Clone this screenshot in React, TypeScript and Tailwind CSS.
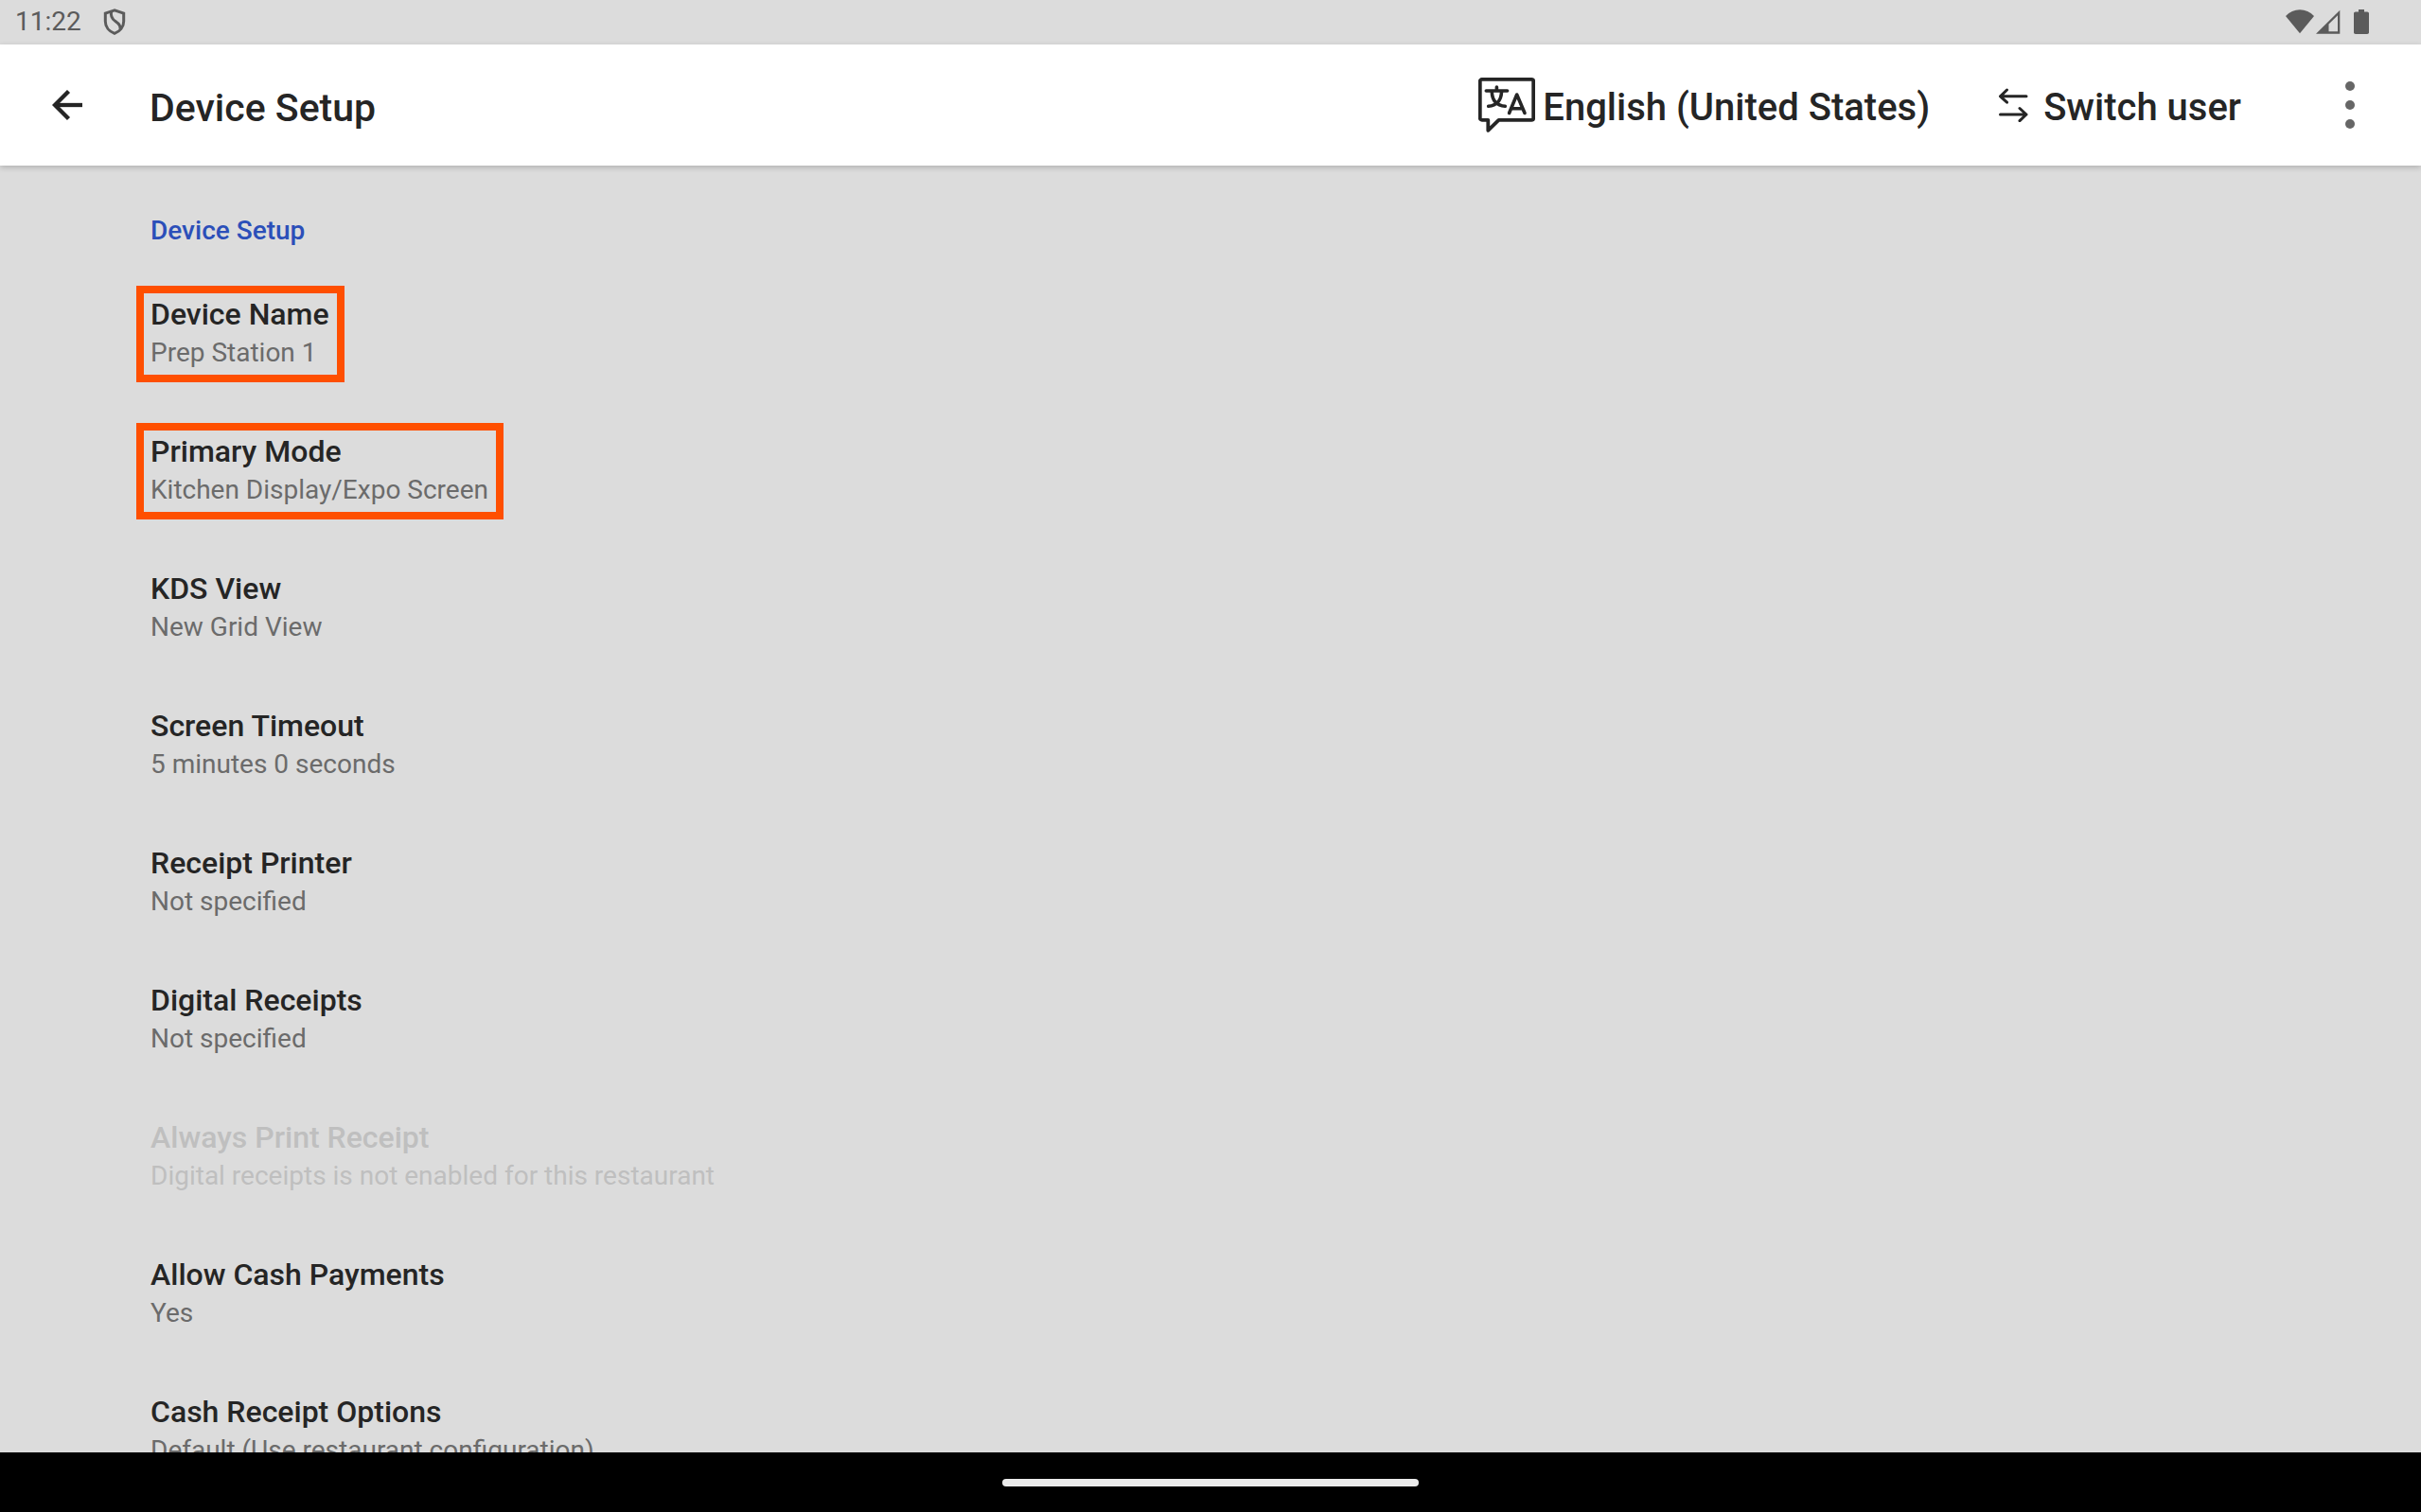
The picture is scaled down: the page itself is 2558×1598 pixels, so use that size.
import clsx from "clsx";

interface Setting {
  title: string;
  value: string;
  highlighted?: boolean;
  disabled?: boolean;
}

const settings: Setting[] = [
  { title: "Device Name", value: "Prep Station 1", highlighted: true },
  { title: "Primary Mode", value: "Kitchen Display/Expo Screen", highlighted: true },
  { title: "KDS View", value: "New Grid View" },
  { title: "Screen Timeout", value: "5 minutes 0 seconds" },
  { title: "Receipt Printer", value: "Not specified" },
  { title: "Digital Receipts", value: "Not specified" },
  {
    title: "Always Print Receipt",
    value: "Digital receipts is not enabled for this restaurant",
    disabled: true,
  },
  { title: "Allow Cash Payments", value: "Yes" },
  { title: "Cash Receipt Options", value: "Default (Use restaurant configuration)" },
];

const ShieldIcon = () => (
  <svg className="h-7 w-6" viewBox="0 0 24 28" fill="none" stroke="currentColor" strokeWidth="3">
    <path d="M12 1.8 2.3 5v8.5c0 6 4 10.800 9.700 12.800 5.700-2 9.700-6.800 9.700-12.800V5L12 1.800Z" />
    <path d="M8.700 2.800c-1.200 5 .3 8 4.300 10.700s6 5 4.800 8.500" />
  </svg>
);

const WifiIcon = () => (
  <svg className="h-[26px] w-[30px]" viewBox="0 0 30 26" fill="currentColor">
    <path d="M15 25.300 0 7C4.200 2.500 9.200.2 15 .2S25.800 2.500 30 7L15 25.300Z" />
  </svg>
);

const SignalIcon = () => (
  <svg className="h-[26px] w-[26px]" viewBox="0 0 26 26" fill="currentColor">
    <path fillRule="evenodd" d="M25.300.8v25H0L25.300.8ZM23 6.300l-9.500 9.200V23.300H23V6.300Z" />
  </svg>
);

const BatteryIcon = () => (
  <svg className="h-[26px] w-4" viewBox="0 0 16 26" fill="currentColor">
    <path d="M5 0h6v2.500h3.200c1 0 1.800.8 1.800 1.800v20c0 1-.8 1.700-1.800 1.700H1.800C.8 26 0 25.300 0 24.300v-20c0-1 .8-1.800 1.800-1.800H5V0Z" />
  </svg>
);

const BackIcon = () => (
  <svg className="h-8 w-8" viewBox="0 0 32 32" fill="none" stroke="currentColor" strokeWidth="4.300">
    <path d="M32 16H4" />
    <path d="M17.500 1.500 3 16l14.500 14.500" strokeLinejoin="miter" />
  </svg>
);

const LanguageIcon = () => (
  <svg
    className="h-[58px] w-[60px]"
    viewBox="0 0 60 58"
    fill="none"
    stroke="currentColor"
    strokeLinecap="round"
    strokeLinejoin="round"
    strokeWidth="3.800"
  >
    <path d="M3.800 1.900h52.400a2 2 0 0 1 2 2v38.900a2 2 0 0 1-2 2H21.500L10.300 55.800V44.800H3.800a2 2 0 0 1-2-2V3.900a2 2 0 0 1 2-2Z" />
    <g strokeWidth="3.600">
      <path d="M8.300 14h22.300M19.400 10v4" />
      <path d="M14.300 15.500c.4 8.500 5.200 14 14 14.800M24.500 15.500c-.4 8.500-5.200 14-13.800 14.800" />
      <path d="m32.600 37.500 8.100-19.500L49 37.500M35.500 32.800h11" />
    </g>
  </svg>
);

const SwitchIcon = () => (
  <svg
    className="h-9 w-8"
    viewBox="0 0 32 36"
    fill="none"
    stroke="currentColor"
    strokeLinecap="round"
    strokeLinejoin="round"
    strokeWidth="3"
  >
    <path d="M30 8.800H2.500M9.500 2 2.500 8.800l7 6.400" />
    <path d="M2.500 28H30M23 21.500l7 6.500-7 6.700" />
  </svg>
);

const MoreIcon = () => (
  <svg className="h-[50px] w-[10px]" viewBox="0 0 10 50" fill="currentColor">
    <circle cx="5" cy="5" r="5" />
    <circle cx="5" cy="25" r="5" />
    <circle cx="5" cy="45" r="5" />
  </svg>
);

const StatusBar = () => (
  <div className="flex h-[47px] shrink-0 items-center justify-between pr-[55px] pb-px pl-4 text-[#5b5b5b]">
    <div className="flex items-center gap-[23px]">
      <span className="text-[28px] leading-[48px]">11:22</span>
      <ShieldIcon />
    </div>
    <div className="flex items-center">
      <WifiIcon />
      <div className="pr-3.5 pl-0.5">
        <SignalIcon />
      </div>
      <BatteryIcon />
    </div>
  </div>
);

const AppBar = () => (
  <header className="relative flex h-32 shrink-0 items-center bg-white text-[40px] leading-[48px] font-medium text-[#252525] shadow-[0_2px_6px_rgba(0,0,0,0.2)]">
    <button type="button" aria-label="Back" className="flex h-full w-[142px] items-center justify-center">
      <BackIcon />
    </button>
    <h1 className="pt-1.5 pl-4 text-[41px]">Device Setup</h1>
    <div className="ml-auto flex h-full items-center">
      <button type="button" className="flex h-full items-center gap-2 px-9">
        <LanguageIcon />
        <span className="pt-1.5">English (United States)</span>
      </button>
      <button type="button" className="flex h-full items-center gap-4 pr-10 pl-9">
        <SwitchIcon />
        <span className="pt-1.5">Switch user</span>
      </button>
      <button
        type="button"
        aria-label="More options"
        className="flex h-full w-[150px] items-center justify-center text-[#666666]"
      >
        <MoreIcon />
      </button>
    </div>
  </header>
);

const SettingRow = ({ title, value, highlighted, disabled }: Setting) => (
  <li>
    <button type="button" disabled={disabled} className="flex w-full px-[159px] py-8 text-left">
      <span className="relative flex flex-col">
        <span
          className={clsx(
            "text-[32px] leading-[42px] font-medium",
            disabled ? "text-[#bfbfbf]" : "text-[#252525]"
          )}
        >
          {title}
        </span>
        <span
          className={clsx(
            "text-[28px] leading-[39px]",
            disabled ? "text-[#bfbfbf]" : "text-[#6b6b6b]"
          )}
        >
          {value}
        </span>
        {highlighted && (
          <span className="absolute -top-[9px] -right-4 -bottom-3 -left-[15px] border-8 border-[#ff4f00]"></span>
        )}
      </span>
    </button>
  </li>
);

const App = () => {
  return (
    <div className="flex h-screen flex-col overflow-hidden bg-[#dcdcdc] font-[Roboto,sans-serif]">
      <StatusBar />
      <AppBar />

      <main className="min-h-0 flex-1 overflow-hidden pt-[49px]">
        <h2 className="px-[159px] pb-[15px] text-[28px] leading-[40px] font-medium text-[#2b4fb9]">
          Device Setup
        </h2>
        <ul>
          {settings.map((setting) => (
            <SettingRow key={setting.title} {...setting} />
          ))}
        </ul>
      </main>

      <div className="flex h-[63px] shrink-0 items-center justify-center bg-black">
        <div className="h-2 w-[440px] rounded-full bg-[#ebebeb]"></div>
      </div>
    </div>
  );
};

export default App;
